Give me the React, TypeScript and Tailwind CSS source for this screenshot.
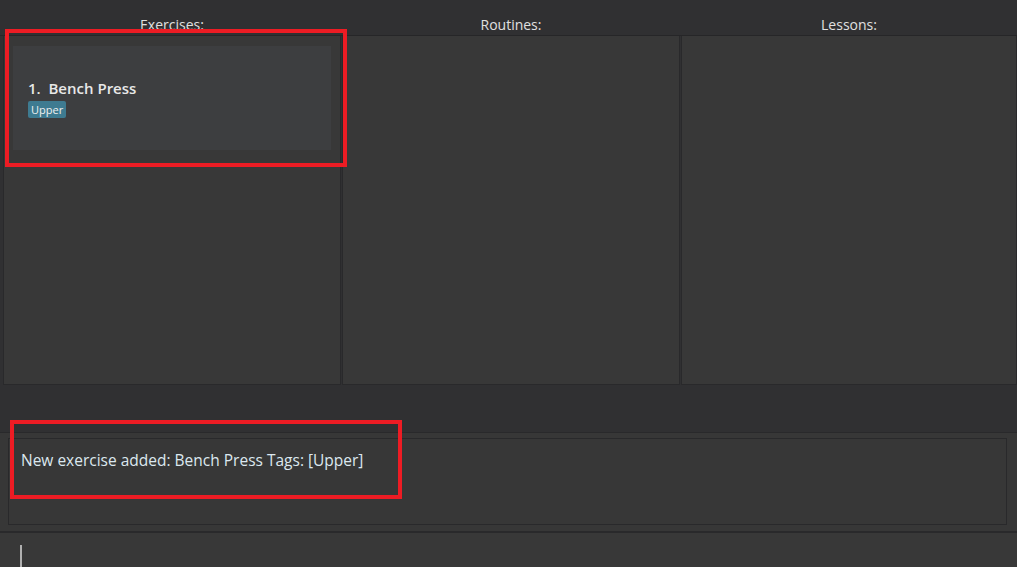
import React from "react";

const columns = ["Exercises:", "Routines:", "Lessons:"];
const widths = ["w-[338px]", "w-[338px]", "flex-1"];

const font = { fontFamily: '"Open Sans", "Noto Sans", sans-serif' };

const ExerciseCard = () => (
  <div className="mx-[9px] mt-[10px] h-[104px] bg-[#3d3e40] pl-[15px] pt-[32px]">
    <div className="text-[15px] font-semibold leading-[20px] text-[#e8e8e8]">
      1.&nbsp;&nbsp;Bench Press
    </div>
    <div className="mt-[3px] flex">
      <span className="rounded-[2px] bg-[#3e7b91] px-[3px] text-[11px] leading-[17px] text-[#f0f0f0]">
        Upper
      </span>
    </div>
  </div>
);

export default function App() {
  return (
    <div
      className="relative flex h-[567px] w-[1017px] flex-col overflow-hidden bg-[#303032]"
      style={font}
    >
      <div className="flex h-[35px] shrink-0 gap-[1px] pl-[3px]">
        {columns.map((c, i) => (
          <div
            key={c}
            className={`${widths[i]} flex items-end justify-center pb-[1px] text-[14px] leading-[19px] text-[#e0e0e0]`}
          >
            {c}
          </div>
        ))}
      </div>

      <div className="flex h-[350px] shrink-0 gap-[1px] border-t border-[#262628] pl-[3px]">
        {columns.map((c, i) => (
          <div
            key={c}
            className={`${widths[i]} border border-t-0 border-[#29292b] bg-[#383838]`}
          >
            {i === 0 && <ExerciseCard />}
          </div>
        ))}
      </div>

      <div className="h-[47px] shrink-0" />

      <div className="flex h-[99px] shrink-0 flex-col border-t border-[#29292b] bg-[#373737] pb-[6px] pl-[8px] pr-[10px] pt-[5px]">
        <div className="flex-1 border border-[#29292b] pl-[12px] pt-[10px] text-[15.5px] leading-[22px] text-[#dce8ef]">
          New exercise added: Bench Press Tags: [Upper]
        </div>
      </div>

      <div className="h-[36px] shrink-0 overflow-hidden border-t-2 border-[#29292b] bg-[#383838] pl-[20px] pt-[12px]">
        <div className="h-[24px] w-[2px] bg-[#b0b0b0]" />
      </div>

      <div className="pointer-events-none absolute left-[5px] top-[29px] h-[138px] w-[342px] border-4 border-[#ed1c24]" />
      <div className="pointer-events-none absolute left-[10px] top-[420px] h-[79px] w-[392px] border-4 border-[#ed1c24]" />
    </div>
  );
}
